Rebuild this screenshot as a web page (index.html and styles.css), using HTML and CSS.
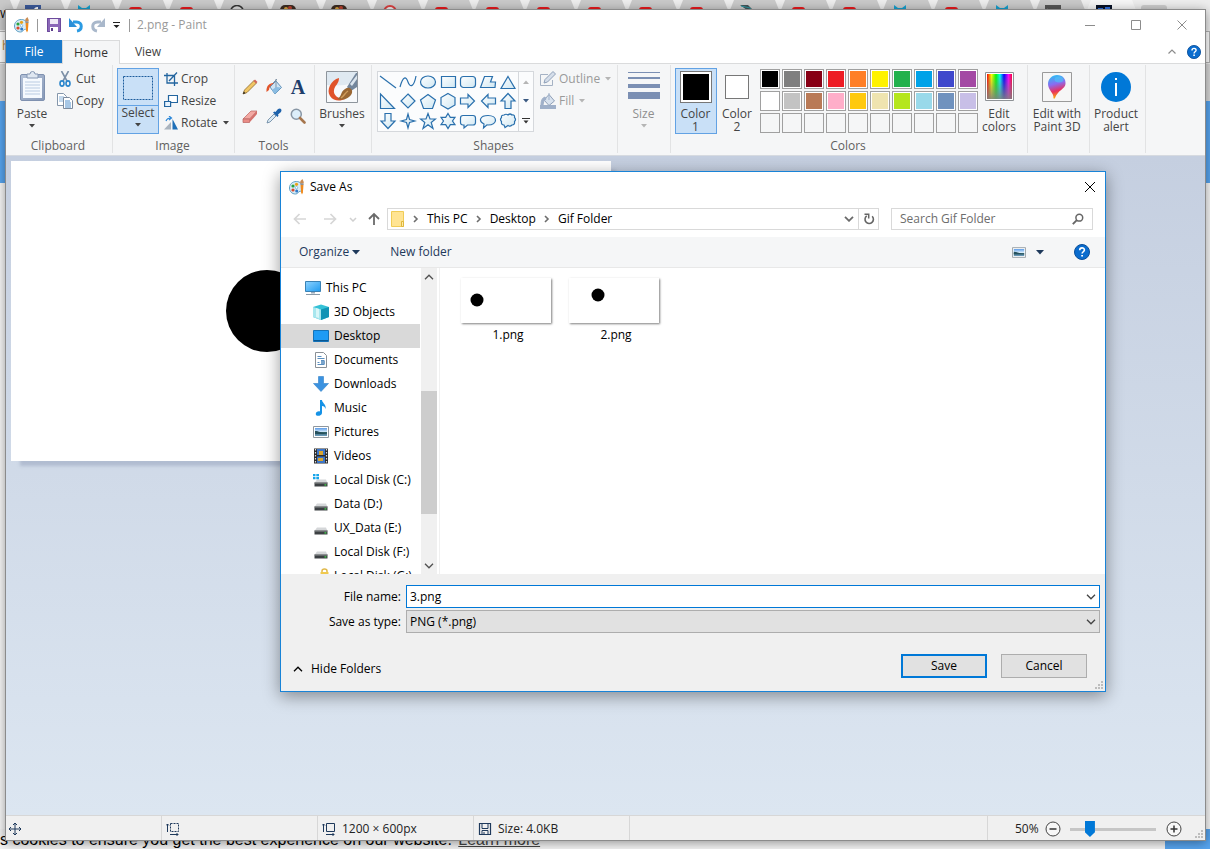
FILE: index.html
```html
<!DOCTYPE html>
<html lang="en">
<head>
<meta charset="utf-8">
<title>2.png - Paint</title>
<link rel="stylesheet" href="styles.css">
</head>
<body>
<svg class="defs" aria-hidden="true">
  <defs>
    <linearGradient id="gBlue" x1="0" y1="0" x2="1" y2="1"><stop offset="0" stop-color="#8fd3ff"/><stop offset="1" stop-color="#1f9bf0"/></linearGradient>
    <linearGradient id="gShape" x1="0" y1="0" x2="1" y2="1"><stop offset="0" stop-color="#fff"/><stop offset="1" stop-color="#cfe7f2"/></linearGradient>
    <linearGradient id="gRain" x1="0" x2="1" y1="0" y2="0"><stop offset="0" stop-color="#f00"/><stop offset=".18" stop-color="#ff0"/><stop offset=".36" stop-color="#0f0"/><stop offset=".52" stop-color="#0ff"/><stop offset=".68" stop-color="#00f"/><stop offset=".86" stop-color="#f0f"/><stop offset="1" stop-color="#f03"/></linearGradient>
    <linearGradient id="gGray" x1="0" x2="0" y1="0" y2="1"><stop offset="0" stop-color="#808080" stop-opacity="0"/><stop offset="1" stop-color="#808080" stop-opacity=".9"/></linearGradient>
    <linearGradient id="gBalloon" x1=".2" x2=".4" y1="0" y2="1"><stop offset="0" stop-color="#25c4f5"/><stop offset=".4" stop-color="#8a6cf0"/><stop offset=".7" stop-color="#e8315f"/><stop offset="1" stop-color="#ffb400"/></linearGradient>
    <linearGradient id="gPhoto" x1="0" x2="0" y1="0" y2="1"><stop offset="0" stop-color="#5b9be8"/><stop offset=".5" stop-color="#d8ecfa"/><stop offset=".55" stop-color="#2f5f63"/><stop offset="1" stop-color="#6fa0c4"/></linearGradient>
    <linearGradient id="gClip" x1="0" x2="1" y1="0" y2="1"><stop offset="0" stop-color="#b4c2d8"/><stop offset="1" stop-color="#8799b8"/></linearGradient>
  </defs>
  <symbol id="paint" viewBox="0 0 16 16">
    <path d="M7.500 2.500C3 2.500.5 5.500.5 9c0 3.500 2.500 6 6 6 2.600 0 2.400-2 3.600-2.400 1.600-.4 3.400-.4 3.400-3.600 0-4-2.500-6.500-6-6.500z" fill="#d7ebf6" stroke="#5d9fc4"/>
    <circle cx="4" cy="7" r="1.600" fill="#2aa33c"/><circle cx="7.500" cy="5.300" r="1.600" fill="#e8a21c"/><circle cx="4" cy="11" r="1.600" fill="#d9492c"/><circle cx="7.700" cy="12" r="1.500" fill="#2f78c8"/><circle cx="7.500" cy="8.700" r="1.200" fill="#fff" stroke="#5d9fc4" stroke-width=".6"/>
    <path d="M11.500 5.500h3l-.6 8-.9 2-.9-2z" fill="#f08a1d"/><path d="M11.500 4.200h3v1.800h-3z" fill="#8b8f94"/><path d="M11.200 4.200C11 2 12 1.500 13.500 0c.3 1.600 1.600 2.500 1.200 4.200z" fill="#c98b52"/>
  </symbol>
  <symbol id="caret" viewBox="0 0 6 4"><path d="M0 0h6L3 3.500z" fill="currentColor"/></symbol>
  <symbol id="drive" viewBox="0 0 16 16"><path d="M4 7.500h9l1.500 3.500h-13z" fill="#d5d7d9"/><path d="M1.500 10.500h13v4h-13z" fill="#3c4043"/><path d="M1.500 10.500h13v1h-13z" fill="#8c9092"/><path d="M11.500 12.300h1.800v1.200h-1.800z" fill="#3fe04a"/></symbol>
  <symbol id="photo" viewBox="0 0 16 12"><path d="M.5.5h15v11H.5z" fill="#fff" stroke="#8e979e"/><path d="M2 2h12v8H2z" fill="url(#gPhoto)"/><path d="M2 5c4 0 6 2 12 2.500V8H2z" fill="#25505c"/></symbol>
  <symbol id="help" viewBox="0 0 16 16"><circle cx="8" cy="8" r="7.500" fill="#0a6cce" stroke="#0a4f9a"/><path d="M5.700 6.200c0-3.100 4.700-3 4.700-.3 0 1.800-2.300 1.900-2.300 3.700" fill="none" stroke="#fff" stroke-width="1.600"/><path d="M7.200 10.900h1.800v1.700H7.200z" fill="#fff"/></symbol>
  <symbol id="chev" viewBox="0 0 10 6"><path d="M1 .8l4 4 4-4" fill="none" stroke="currentColor" stroke-width="1.300"/></symbol>
  <symbol id="crumb" viewBox="0 0 6 8"><path d="M1 1L4 4 1 7" fill="none" stroke="#6d6d6d" stroke-width="1.600"/></symbol>
  <symbol id="yt" viewBox="0 0 16 12"><rect x="2" y="2" width="13" height="10" rx="3" fill="#e8191c"/></symbol>
  <symbol id="cat" viewBox="0 0 16 12"><path d="M2 0l4 3h4l4-3v5l2 2H0l2-2z" fill="#16a0cf"/></symbol>
  <symbol id="food" viewBox="0 0 16 12"><rect width="16" height="12" rx="5" fill="#3a2b22"/><circle cx="6" cy="4" r="2" fill="#d8a33b"/><circle cx="10" cy="3" r="2" fill="#b9402e"/></symbol>
</svg>

<main class="desktop">
  <section class="browser" aria-label="Browser">
    <nav class="btabs">
      <span class="btab first">W</span>
      <span class="btab"><svg viewBox="0 0 16 12"><path d="M0 0h16v12H0z" fill="#3b5998"/><path d="M9 12V5q0-3 4-3v2q-2 0-2 2v6z" fill="#fff"/></svg>(1)</span>
      <span class="btab"><svg><use href="#cat"/></svg>[</span>
      <span class="btab"><svg><use href="#yt"/></svg>Vi</span>
      <span class="btab"><svg><use href="#yt"/></svg>Ni</span>
      <span class="btab"><svg viewBox="0 0 16 12"><circle cx="8" cy="7" r="6.500" fill="#ddd" stroke="#333" stroke-width="1.500"/></svg>F</span>
      <span class="btab"><svg><use href="#food"/></svg>(S</span>
      <span class="btab"><svg><use href="#food"/></svg>(S</span>
      <span class="btab"><svg viewBox="0 0 16 12"><circle cx="8" cy="7" r="6" fill="#eee" stroke="#d94040" stroke-width="2"/></svg>L</span>
      <span class="btab"><svg><use href="#yt"/></svg>[</span>
      <span class="btab"><svg><use href="#yt"/></svg>Ul</span>
      <span class="btab"><svg><use href="#yt"/></svg>V</span>
      <span class="btab"><svg><use href="#yt"/></svg>V</span>
      <span class="btab"><svg><use href="#yt"/></svg>Di</span>
      <span class="btab"><svg><use href="#yt"/></svg>U</span>
      <span class="btab"><svg viewBox="0 0 16 12"><path d="M1 0h8l6 6-2 6-5-7z" fill="#435358"/><path d="M2 1l9 2 3 5" fill="none" stroke="#2c9aa5"/></svg>Y(</span>
      <span class="btab"><svg><use href="#yt"/></svg>V</span>
      <span class="btab"><svg><use href="#yt"/></svg>(S</span>
      <span class="btab"><svg><use href="#cat"/></svg>[</span>
      <span class="btab"><svg><use href="#yt"/></svg>(S</span>
      <span class="btab"><svg><use href="#cat"/></svg>[</span>
      <span class="btab"><svg viewBox="0 0 16 12"><path d="M0 0h16v12H0z" fill="#555"/><path d="M2 4l3 2-3 2" fill="none" stroke="#ccc"/></svg>Gl</span>
      <span class="btab active"><svg viewBox="0 0 16 12"><path d="M0 0h16v12H0z" fill="#081226"/><path d="M2 3h5v5H2zM9 2h5v6H9z" fill="#2d6fe0"/></svg>V</span>
      <span class="newtab"></span>
    </nav>
    <div class="bbar"><span class="baddr">h</span></div>
    <div class="bhead"></div>
    <div class="bpage"></div>
    <div class="cookie"><p>s cookies to ensure you get the best experience on our website. <a href="#">Learn more</a></p><span class="gotit"></span></div>
  </section>

  <section class="paint" aria-label="Paint">
    <header class="titlebar">
      <svg class="i16"><use href="#paint"/></svg>
      <span class="tsep"></span>
      <button class="qa" aria-label="Save"><svg class="i16" viewBox="0 0 16 16"><path d="M1 1h14v14H1z" fill="#8b67b8"/><path d="M1.500 1.500h13v13h-13z" fill="none" stroke="#6c4a9c"/><path d="M4 2h8v5H4z" fill="#efe9f6"/><path d="M4 10h8v5H4z" fill="#fff"/><path d="M5 11h2v3H5z" fill="#5b3d8a"/></svg></button>
      <button class="qa" aria-label="Undo"><svg class="i16" viewBox="0 0 16 16"><path d="M5 5h3.500c6.500 0 6 8 .5 9" fill="none" stroke="#2b9be3" stroke-width="3"/><path d="M1 1v9h8z" fill="#2b8fd8"/></svg></button>
      <button class="qa" aria-label="Redo"><svg class="i16" viewBox="0 0 16 16"><path d="M11 5H7.500C1 5 1.500 13 7 14" fill="none" stroke="#a9b8cb" stroke-width="3"/><path d="M15 1v9H7z" fill="#a9b8cb"/></svg></button>
      <button class="qa small" aria-label="Customize"><svg class="i8" viewBox="0 0 8 6"><path d="M0 0h7v1H0zM.5 3h6l-3 3z" fill="#222"/></svg></button>
      <span class="tsep last"></span>
      <h1>2.png - Paint</h1>
      <div class="wctl">
        <button aria-label="Minimize"><svg viewBox="0 0 10 10"><path d="M0 5.500h10" stroke="#8c8c8c"/></svg></button>
        <button aria-label="Maximize"><svg viewBox="0 0 10 10"><path d="M.5.5h9v9h-9z" fill="none" stroke="#8c8c8c"/></svg></button>
        <button aria-label="Close"><svg viewBox="0 0 10 10"><path d="M.5.5l9 9M9.500.5l-9 9" stroke="#8c8c8c"/></svg></button>
      </div>
    </header>
    <nav class="tabs">
      <button class="file">File</button><button class="on">Home</button><button>View</button>
      <span class="fill"></span>
      <button class="tool" aria-label="Collapse ribbon"><svg class="c8" viewBox="0 0 8 5"><path d="M.5 4.500L4 1l3.500 3.500" fill="none" stroke="#8c8c8c" stroke-width="1.200"/></svg></button>
      <button class="tool" aria-label="Help"><svg class="i14"><use href="#help"/></svg></button>
    </nav>

    <div class="ribbon">
      <div class="group clip">
        <div class="gbody">
          <button class="big"><svg class="i32" viewBox="0 0 32 32"><rect x="4.500" y="3.500" width="24" height="26" rx="1.500" fill="url(#gClip)" stroke="#7f91b0"/><path d="M7 7h19v20H7z" fill="#f5f9fe"/><path d="M9 11h15M9 14h15M9 17h15M9 20h15M9 23h15" stroke="#b9cbe2"/><path d="M11 3h3q0-2.500 2.500-2.500T19 3h3v4H11z" fill="#dfe7f1" stroke="#8496b2"/></svg>Paste<svg class="car"><use href="#caret"/></svg></button>
          <div class="list">
            <button><svg class="i16" viewBox="0 0 16 16"><path d="M4.500 0l5.500 10M11.500 0L6 10" stroke="#7c8fa6" stroke-width="1.600"/><ellipse cx="5" cy="12.500" rx="2" ry="2.600" fill="none" stroke="#2b86cc" stroke-width="1.600"/><ellipse cx="11" cy="12.500" rx="2" ry="2.600" fill="none" stroke="#2b86cc" stroke-width="1.600"/></svg>Cut</button>
            <button><svg class="i16" viewBox="0 0 16 16"><path d="M.5.5h6l3 3v9h-9z" fill="#fff" stroke="#8496ab"/><path d="M2 4h5M2 6h5M2 8h5" stroke="#88b2da"/><path d="M6.500 4.500h6l3 3v8h-9z" fill="#fff" stroke="#7c8b9e"/><path d="M8 8h5M8 10h6M8 12h6M8 14h6" stroke="#4f8fcc"/></svg>Copy</button>
          </div>
        </div>
        <div class="glabel">Clipboard</div>
      </div>

      <div class="group image">
        <div class="gbody">
          <button class="big sel"><span class="seltop"><svg viewBox="0 0 32 26"><path d="M1.500 1.500h29v23h-29z" fill="none" stroke="#1c5c9c" stroke-dasharray="2 1"/></svg></span>Select<svg class="car"><use href="#caret"/></svg></button>
          <div class="list">
            <button><svg class="i14" viewBox="0 0 14 14"><path d="M3 1v10h11M0 3.500h10.500V14M13 .5L5 9" fill="none" stroke="#23659f" stroke-width="1.300"/></svg>Crop</button>
            <button><svg class="i14" viewBox="0 0 14 14"><path d="M4.500 1.500h9v7h-9z" fill="#fff" stroke="#23659f" stroke-width="1.200"/><path d="M.6 7.500h6v5h-6z" fill="#e8f3fd" stroke="#23659f" stroke-width="1.200"/></svg>Resize</button>
            <button><svg class="i14" viewBox="0 0 14 14"><path d="M7 6v7.500H0z" fill="#aab4bf"/><path d="M8.500 3v10.500H14z" fill="#1e6fb8"/><path d="M2 5q1-3 5-3M5 0l2.500 2L5 4" fill="none" stroke="#2a86d8" stroke-width="1.200"/></svg>Rotate<svg class="car"><use href="#caret"/></svg></button>
          </div>
        </div>
        <div class="glabel">Image</div>
      </div>

      <div class="group tools">
        <div class="gbody">
          <div class="toolgrid">
            <button aria-label="Pencil"><svg viewBox="0 0 16 16"><path d="M1 15l1.500-4L12 1.500l2.500 2.500L5 13.500z" fill="#f1c665" stroke="#8d6a2c" stroke-width=".8"/><path d="M11.500 2l2.500 2.500L15.500 3 13 .5z" fill="#d3675c"/><path d="M1 15l.8-2.500 1.700 1.700z" fill="#222"/></svg></button>
            <button aria-label="Fill with color"><svg viewBox="0 0 16 16"><path d="M4 8l6-6 5.500 6.500L9 15z" fill="#cfe4f4" stroke="#6191b8"/><path d="M10 11V0M7 4l4-4" stroke="#8093a5"/><path d="M8 4C4 4 0 6 .5 13l2.500-2C3 8 5 6 8 4z" fill="#e2552c"/><path d="M10 8l5 .5L9 15l-3-4z" fill="#8abce2"/></svg></button>
            <button aria-label="Text"><b class="letter">A</b></button>
            <button aria-label="Eraser"><svg viewBox="0 0 16 16"><path d="M1 11l8-8h6l-7.500 8z" fill="#f3a9a3" stroke="#b9625e" stroke-width=".7"/><path d="M1 11h6.500v3.500H1z" fill="#e98c86" stroke="#b9625e" stroke-width=".7"/><path d="M7.500 11L15 3v3l-7.500 8.500z" fill="#d4716c"/></svg></button>
            <button aria-label="Color picker"><svg viewBox="0 0 16 16"><path d="M1 15l1-3 6-6 2 2-6 6z" fill="#dbeaf5" stroke="#62819d" stroke-width=".8"/><path d="M7 4.500l1.500-1 1 .5L12 1q2-1 3 0t0 3l-3 2.500.5 1-1 1.500z" fill="#1e62ab"/></svg></button>
            <button aria-label="Magnifier"><svg viewBox="0 0 16 16"><circle cx="6.300" cy="6.300" r="5" fill="#dceefa" stroke="#8896a5" stroke-width="1.500"/><path d="M10 10l4.500 4.500" stroke="#a6764e" stroke-width="2.600" stroke-linecap="round"/></svg></button>
          </div>
        </div>
        <div class="glabel">Tools</div>
      </div>

      <div class="group brushes">
        <div class="gbody">
          <button class="big"><svg class="i32" viewBox="0 0 32 32"><path d="M.5.5h31v31H.5z" fill="#f7f9fb" stroke="#8e959c"/><path d="M1 1h30v10Q16 16 1 14z" fill="#dfe9f1"/><path d="M13 7C5 9 0 19 4 25c4 6 11 5 15 3-7 0-12-4-11-9 1-5 5-6 5-12z" fill="#e0532a"/><path d="M21 16L30 2h1v14l-6 4z" fill="#73869c"/><path d="M24 13l7-9v4l-5 7z" fill="#dbe5ee"/><path d="M11 28c5-2 3-7 8-10 4-3 8 0 7 4-2 5-8 8-15 6z" fill="#9a6733"/><path d="M15 27c3-2 4-5 7-7" fill="none" stroke="#cf9c5c" stroke-width="1.500"/></svg>Brushes<svg class="car"><use href="#caret"/></svg></button>
        </div>
        <div class="glabel"></div>
      </div>

      <div class="group shapes">
        <div class="gbody">
          <div class="gallery">
            <div class="shapegrid">
              <button aria-label="Line"><svg viewBox="0 0 18 18"><path d="M1 3l16 12"/></svg></button>
              <button aria-label="Curve"><svg viewBox="0 0 18 18"><path class="nf" d="M1 14C4 3 7 3 9 9s6 5 8-6"/></svg></button>
              <button aria-label="Oval"><svg viewBox="0 0 18 18"><ellipse cx="9" cy="9" rx="7.500" ry="6"/></svg></button>
              <button aria-label="Rectangle"><svg viewBox="0 0 18 18"><path d="M2.500 3.500h14v11h-14z"/></svg></button>
              <button aria-label="Rounded rectangle"><svg viewBox="0 0 18 18"><rect x="1.500" y="3.500" width="15" height="11" rx="3"/></svg></button>
              <button aria-label="Polygon"><svg viewBox="0 0 18 18"><path d="M5.500 3.500h8l-2 5.500h5l-.5 5.500H1.500z"/></svg></button>
              <button aria-label="Triangle"><svg viewBox="0 0 18 18"><path d="M9 3.500l7 12H2z"/></svg></button>
              <button aria-label="Right triangle"><svg viewBox="0 0 18 18"><path d="M1.500 2v14.500h14z"/></svg></button>
              <button aria-label="Diamond"><svg viewBox="0 0 18 18"><path d="M9 2l7 7-7 7-7-7z"/></svg></button>
              <button aria-label="Pentagon"><svg viewBox="0 0 18 18"><path d="M9 2.500l7.500 5.500-3 8.500h-9L1.500 8z"/></svg></button>
              <button aria-label="Hexagon"><svg viewBox="0 0 18 18"><path d="M9 1.500l7 4v7.500l-7 4-7-4V5.500z"/></svg></button>
              <button aria-label="Right arrow"><svg viewBox="0 0 18 18"><path d="M1.500 6H9V2.500L15.500 9 9 15.500V12H1.500z"/></svg></button>
              <button aria-label="Left arrow"><svg viewBox="0 0 18 18"><path d="M16.500 6H9V2.500L2.500 9 9 15.500V12h7.500z"/></svg></button>
              <button aria-label="Up arrow"><svg viewBox="0 0 18 18"><path d="M6 16.500V9H2L9 1.500 16 9h-4v7.500z"/></svg></button>
              <button aria-label="Down arrow"><svg viewBox="0 0 18 18"><path d="M6 1.500V9H2l7 7.500L16 9h-4V1.500z"/></svg></button>
              <button aria-label="Four-point star"><svg viewBox="0 0 18 18"><path d="M9 2l1.500 5.500L16 9l-5.500 1.500L9 16l-1.500-5.500L2 9l5.500-1.500z"/></svg></button>
              <button aria-label="Five-point star"><svg viewBox="0 0 18 18"><path d="M9 1.500l2 5.500h5.500l-4.300 3.500 1.800 6-5-3.700-5 3.700 1.800-6L1.500 7H7z"/></svg></button>
              <button aria-label="Six-point star"><svg viewBox="0 0 18 18"><path d="M9 1.500l2.300 3.800H16L13.500 9l2.500 3.700h-4.700L9 16.500l-2.300-3.800H2L4.500 9 2 5.300h4.700z"/></svg></button>
              <button aria-label="Rounded callout"><svg viewBox="0 0 18 18"><path d="M4 3.500h10q2.500 0 2.500 2.500v4.500Q16.500 13 14 13H8.500L5 16v-3H4q-2.500 0-2.500-2.500V6Q1.500 3.500 4 3.500z"/></svg></button>
              <button aria-label="Oval callout"><svg viewBox="0 0 18 18"><path d="M9 3.500c10 0 10 9.500 0 9.500l-1-.1L4.500 16l.5-4C-1 9 1 3.500 9 3.500z"/></svg></button>
              <button aria-label="Cloud callout"><svg viewBox="0 0 18 18"><path d="M5 3q2-1.500 4 0 2-2 4 0 3-.5 2.500 2.500 2 2 0 4Q16 13 13 13q-2 2-4 .5L6 15.500 5 13q-3 0-2.500-3.500-2-2 0-4Q2 3 5 3z"/></svg></button>
            </div>
            <div class="gscroll"><svg class="car dim flip"><use href="#caret"/></svg><svg class="car"><use href="#caret"/></svg><svg class="i8" viewBox="0 0 8 6"><path d="M0 0h8v1H0zM1.500 2.500h5L4 5.500z" fill="#333"/></svg></div>
          </div>
          <div class="list dis">
            <button disabled><svg class="i16" viewBox="0 0 16 16"><path d="M12.500 9v5.500h-12v-11H8" fill="none" stroke="#a5b2c4"/><path d="M4 12l1-3.500L13 .5 15.500 3 7.500 11z" fill="#d5deea" stroke="#8fa0b8"/></svg>Outline<svg class="car"><use href="#caret"/></svg></button>
            <button disabled><svg class="i16" viewBox="0 0 16 16"><path d="M0 12h16v4H0z" fill="#9fb0c9"/><path d="M4 7l5-5.500L14.500 8 9 12.500z" fill="#d8e2ee" stroke="#8fa0b8"/><path d="M9 7V0M5 4Q1 5 1 12h2q0-4 3-6z" fill="#9fb0c9" stroke="#9fb0c9"/></svg>Fill<svg class="car"><use href="#caret"/></svg></button>
          </div>
        </div>
        <div class="glabel">Shapes</div>
      </div>

      <div class="group size">
        <div class="gbody">
          <button class="big" disabled><svg class="i32" viewBox="0 0 32 32"><path d="M0 1h32v1H0zM0 6h32v2H0zM0 13h32v4H0zM0 21h32v7H0z" fill="#7b8fb3"/></svg>Size<svg class="car"><use href="#caret"/></svg></button>
        </div>
        <div class="glabel"></div>
      </div>

      <div class="group colors">
        <div class="gbody">
          <button class="big sel"><span class="well black"></span><span>Color<br>1</span></button>
          <button class="big c2"><span class="well white"></span><span>Color<br>2</span></button>
          <div class="palette">
            <button class="k1" aria-label="Black"></button><button class="k2" aria-label="Gray"></button><button class="k3" aria-label="Dark red"></button><button class="k4" aria-label="Red"></button><button class="k5" aria-label="Orange"></button><button class="k6" aria-label="Yellow"></button><button class="k7" aria-label="Green"></button><button class="k8" aria-label="Turquoise"></button><button class="k9" aria-label="Indigo"></button><button class="k10" aria-label="Purple"></button>
            <button class="k11" aria-label="White"></button><button class="k12" aria-label="Light gray"></button><button class="k13" aria-label="Brown"></button><button class="k14" aria-label="Rose"></button><button class="k15" aria-label="Gold"></button><button class="k16" aria-label="Light yellow"></button><button class="k17" aria-label="Lime"></button><button class="k18" aria-label="Light turquoise"></button><button class="k19" aria-label="Blue-gray"></button><button class="k20" aria-label="Lavender"></button>
            <button class="k0" aria-label="Custom 1"></button><button class="k0" aria-label="Custom 2"></button><button class="k0" aria-label="Custom 3"></button><button class="k0" aria-label="Custom 4"></button><button class="k0" aria-label="Custom 5"></button><button class="k0" aria-label="Custom 6"></button><button class="k0" aria-label="Custom 7"></button><button class="k0" aria-label="Custom 8"></button><button class="k0" aria-label="Custom 9"></button><button class="k0" aria-label="Custom 10"></button>
          </div>
          <button class="big"><svg class="i32" viewBox="0 0 32 32"><path d="M2.500 1.500h28v28h-28z" fill="#fff" stroke="#8e9296"/><path d="M4 3h25v25H4z" fill="url(#gRain)"/><path d="M4 3h25v25H4z" fill="url(#gGray)"/></svg><span>Edit<br>colors</span></button>
        </div>
        <div class="glabel">Colors</div>
      </div>

      <div class="group p3d">
        <div class="gbody"><button class="big"><svg class="i32" viewBox="0 0 32 32"><path d="M1.500 1.500h29v29h-29z" fill="#f6f6f6" stroke="#9a9a9a"/><path d="M16 4c6 0 9 4 8.500 9-.5 5-7.500 6-10.500 14-.5 1-1.500 1-1.500 0 .5-5-5.500-8-5.500-14 0-5 4-9 9-9z" fill="url(#gBalloon)"/><ellipse cx="18" cy="8.500" rx="4.500" ry="3" fill="#43d6f7" opacity=".5"/></svg><span>Edit with<br>Paint 3D</span></button></div>
        <div class="glabel"></div>
      </div>
      <div class="group alert">
        <div class="gbody"><button class="big"><svg class="i32" viewBox="0 0 32 32"><circle cx="16" cy="16" r="15" fill="#0078d7"/><path d="M15 7h2v2h-2zM15 12h2v13h-2z" fill="#fff"/></svg><span>Product<br>alert</span></button></div>
        <div class="glabel"></div>
      </div>
    </div>

    <div class="work">
      <div class="canvas"><svg viewBox="0 0 600 300"><circle cx="256" cy="150" r="41" fill="#000"/></svg></div>
    </div>

    <footer class="status">
      <div class="cell"><svg class="i14" viewBox="0 0 14 14"><path d="M7 1v12M1 7h12M5 3l2-2 2 2M5 11l2 2 2-2M3 5L1 7l2 2M11 5l2 2-2 2" fill="none" stroke="#1e395b"/></svg></div>
      <div class="cell"><svg class="i14" viewBox="0 0 14 14"><path d="M4.500 1.500h8v8h-8z" fill="none" stroke="#1e395b" stroke-dasharray="2 1"/><path d="M1.500 10V2M0 3.500L1.500 2 3 3.500M4 12.500h8M10.500 11l1.500 1.500-1.500 1.500" fill="none" stroke="#1e395b"/></svg></div>
      <div class="cell"><svg class="i14" viewBox="0 0 14 14"><path d="M4.500 1.500h8v8h-8z" fill="none" stroke="#1e395b"/><path d="M1.500 10V2M0 3.500L1.500 2 3 3.500M4 12.500h8M10.500 11l1.500 1.500-1.500 1.500" fill="none" stroke="#1e395b"/></svg>1200 × 600px</div>
      <div class="cell"><svg class="i14" viewBox="0 0 14 14"><path d="M1.500 1.500h11v11h-11z" fill="none" stroke="#1e395b" stroke-width="1.200"/><path d="M4 1.500v5h6v-5M4 12.500v-4h6v4M6 10v2" fill="none" stroke="#1e395b"/></svg>Size: 4.0KB</div>
      <div class="cell zoomcell">
        <label for="zoom">50%</label>
        <button aria-label="Zoom out"><svg class="i16" viewBox="0 0 16 16"><circle cx="8" cy="8" r="7" fill="#f7f7f7" stroke="#444"/><path d="M4.500 8h7" stroke="#333" stroke-width="1.500"/></svg></button>
        <input id="zoom" type="range" min="0" max="100" value="20">
        <button aria-label="Zoom in"><svg class="i16" viewBox="0 0 16 16"><circle cx="8" cy="8" r="7" fill="#f7f7f7" stroke="#444"/><path d="M4.500 8h7M8 4.500v7" stroke="#333" stroke-width="1.500"/></svg></button>
        <svg class="grip" viewBox="0 0 9 9"><path d="M6 0h2v2H6zM3 3h2v2H3zM6 3h2v2H6zM0 6h2v2H0zM3 6h2v2H3zM6 6h2v2H6z" fill="#bdbdbd"/></svg>
      </div>
    </footer>
  </section>

  <section class="dialog" role="dialog" aria-label="Save As">
    <header class="dtitle"><svg class="i16"><use href="#paint"/></svg><h2>Save As</h2><button aria-label="Close dialog"><svg viewBox="0 0 12 12"><path d="M1 1l10 10M11 1L1 11" stroke="#000"/></svg></button></header>
    <div class="dnav">
      <button aria-label="Back"><svg class="i14" viewBox="0 0 14 14"><path d="M1.500 7H13M6.500 2l-5 5 5 5" fill="none" stroke="#d6d6d6" stroke-width="1.700"/></svg></button>
      <button aria-label="Forward"><svg class="i14" viewBox="0 0 14 14"><path d="M1 7h11.500M7.500 2l5 5-5 5" fill="none" stroke="#d6d6d6" stroke-width="1.700"/></svg></button>
      <button class="narrow" aria-label="Recent"><svg class="c8" viewBox="0 0 8 5"><path d="M1 1l3 3 3-3" fill="none" stroke="#d0d0d0" stroke-width="1.500"/></svg></button>
      <button class="up" aria-label="Up"><svg class="i14" viewBox="0 0 14 14"><path d="M7 2v11M2 7l5-5 5 5" fill="none" stroke="#6a6a6a" stroke-width="1.800"/></svg></button>
      <div class="addr">
        <svg class="i16 fold" viewBox="0 0 16 16"><path d="M1.500.5h12v15h-12z" fill="#ffe493" stroke="#f0cc57"/><path d="M11.500 10.500h2v5h-2z" fill="#ffeaa8" stroke="#e0b83c"/></svg>
        <svg class="cr"><use href="#crumb"/></svg><a href="#">This PC</a>
        <svg class="cr"><use href="#crumb"/></svg><a href="#">Desktop</a>
        <svg class="cr"><use href="#crumb"/></svg><a href="#">Gif Folder</a>
        <span class="fill"></span>
        <svg class="c10" viewBox="0 0 10 6"><path d="M1 .8l4 4 4-4" fill="none" stroke="#6a6a6a" stroke-width="1.800"/></svg>
        <button class="refresh" aria-label="Refresh"><svg class="i12" viewBox="0 0 12 12"><path d="M9.200 3.300a4.200 4.200 0 1 1-5.500-.4" fill="none" stroke="#666" stroke-width="1.600"/><path d="M1.500 1.200h4.200v4.200" fill="none" stroke="#666" stroke-width="1.500"/></svg></button>
      </div>
      <div class="search"><input type="text" aria-label="Search" placeholder="Search Gif Folder"><svg class="i12" viewBox="0 0 12 12"><circle cx="7.300" cy="4.700" r="3.400" fill="none" stroke="#666" stroke-width="1.500"/><path d="M4.800 7.200L.8 11.200" stroke="#666" stroke-width="1.900"/></svg></div>
    </div>
    <div class="dtool">
      <button>Organize<svg class="c8" viewBox="0 0 8 5"><path d="M0 0h8L4 4.500z" fill="#1e395b"/></svg></button>
      <button>New folder</button>
      <span class="fill"></span>
      <button aria-label="View"><svg class="view"><use href="#photo"/></svg></button>
      <button aria-label="View options"><svg class="c8" viewBox="0 0 8 5"><path d="M0 0h8L4 4.500z" fill="#1e395b"/></svg></button>
      <button class="dhelp" aria-label="Help"><svg class="i16"><use href="#help"/></svg></button>
    </div>
    <div class="dmain">
      <ul class="tree">
        <li class="root"><svg viewBox="0 0 16 16"><path d="M.5 1.500h15v10H.5z" fill="url(#gBlue)" stroke="#3a82b5"/><path d="M6 12h4v1.500H6z" fill="#9ab"/><path d="M1 14.500h14" stroke="#8a9aa8"/></svg>This PC</li>
        <li><svg viewBox="0 0 16 16"><path d="M8 .5l8 2.500v10l-8 3-8-3V3z" fill="#35c1d6"/><path d="M8 5.500L16 3v10l-8 3z" fill="#1293b5"/><path d="M0 3l8 2.500V16l-8-3z" fill="#a7e6ee"/><path d="M3 4l3 1v9l-3-1z" fill="#d7f6f8"/></svg>3D Objects</li>
        <li class="cur"><svg viewBox="0 0 16 16"><path d="M.5 2.500h15v11H.5z" fill="#1e9bf5" stroke="#1472b8"/><path d="M1 12h14v1H1z" fill="#0a5791"/></svg>Desktop</li>
        <li><svg viewBox="0 0 16 16"><path d="M2.500.5h8l3 3v12h-11z" fill="#fff" stroke="#8a9096"/><path d="M4.500 4.500h4M4.500 6.500h7M8 8.500h3.500M4.500 10.500h2M4.500 12.500h7" stroke="#5a8fc0"/><path d="M8 9h4v3H8z" fill="#7ba5cc"/></svg>Documents</li>
        <li><svg viewBox="0 0 16 16"><path d="M5.500.5h5v7h5L8 15.500.5 7.500h5z" fill="#3b92e0" stroke="#2f7fc8" stroke-width=".6"/></svg>Downloads</li>
        <li><svg viewBox="0 0 16 16"><path d="M7 0h2c0 3 4.500 4 3.500 9-.5-2-1.500-3-3.500-3v7c0 3-6 4-6.200 1.200C2.600 12 5 11 7 11.500z" fill="#1592e6"/></svg>Music</li>
        <li><svg class="ph"><use href="#photo"/></svg>Pictures</li>
        <li><svg viewBox="0 0 16 16"><path d="M1 .5h14v15H1z" fill="#2b2b2b"/><path d="M4 1h8v6H4z" fill="#3c75c8"/><path d="M4 8.500h8V15H4z" fill="#3c75c8"/><path d="M6 3h4v4H6zM5 10h5v3H5z" fill="#d9a42e"/><path d="M2.500 1v14M13.500 1v14" stroke="#ddd" stroke-width="1.200" stroke-dasharray="1.500 1.500"/></svg>Videos</li>
        <li><svg viewBox="0 0 16 16"><use href="#drive"/><path d="M0 2h2.500v2.300H0zM3.300 2H6v2.300H3.300zM0 5h2.500v2.300H0zM3.300 5H6v2.300H3.300z" fill="#17a5ea"/></svg>Local Disk (C:)</li>
        <li><svg><use href="#drive"/></svg>Data (D:)</li>
        <li><svg><use href="#drive"/></svg>UX_Data (E:)</li>
        <li><svg><use href="#drive"/></svg>Local Disk (F:)</li>
        <li><svg viewBox="0 0 16 16"><path d="M9 4V3q0-2 2.500-2T14 3v1" fill="none" stroke="#e0b84a" stroke-width="1.500"/><path d="M7.500 4h8v5h-8z" fill="#f0c94e"/></svg>Local Disk (G:)</li>
      </ul>
      <div class="sbar"><svg class="c10 flip"><use href="#chev"/></svg><div class="track"><div class="thumb"></div></div><svg class="c10"><use href="#chev"/></svg></div>
      <div class="files">
        <figure><svg class="thumbpic" viewBox="0 0 90 45"><circle cx="16" cy="22" r="6.500"/></svg><figcaption>1.png</figcaption></figure>
        <figure><svg class="thumbpic" viewBox="0 0 90 45"><circle cx="29" cy="17" r="6.500"/></svg><figcaption>2.png</figcaption></figure>
      </div>
    </div>
    <form class="dform">
      <label for="fname">File name:</label>
      <div class="combo"><input id="fname" type="text" value="3.png"><svg class="c10"><use href="#chev"/></svg></div>
      <label for="ftype">Save as type:</label>
      <div class="combo gray"><select id="ftype"><option>PNG (*.png)</option></select><svg class="c10"><use href="#chev"/></svg></div>
    </form>
    <div class="dfoot">
      <button class="hide"><svg class="c10 flip"><use href="#chev"/></svg>Hide Folders</button>
      <span class="fill"></span>
      <button class="btn primary">Save</button>
      <button class="btn">Cancel</button>
    </div>
    <svg class="grip" viewBox="0 0 9 9"><path d="M6 0h2v2H6zM3 3h2v2H3zM6 3h2v2H6zM0 6h2v2H0zM3 6h2v2H3zM6 6h2v2H6z" fill="#bdbdbd"/></svg>
  </section>
</main>
</body>
</html>
```

FILE: styles.css
```css
* { box-sizing: border-box; }
body { margin: 0; font: 12px/16px "Open Sans", "Noto Sans", sans-serif; color: #000; }
button { font: inherit; color: inherit; background: none; border: 0; padding: 0; margin: 0; display: flex; align-items: center; justify-content: center; }
input, select { font: inherit; color: inherit; }
svg { display: block; flex: none; }
h1, h2, p, ul, figure { margin: 0; padding: 0; font-size: 12px; font-weight: 400; }
.defs { position: absolute; width: 0; height: 0; }
.i32 { width: 32px; height: 32px; }
.i16 { width: 16px; height: 16px; }
.i14 { width: 14px; height: 14px; }
.i12 { width: 12px; height: 12px; }
.i8 { width: 8px; height: 6px; }
.c10 { width: 10px; height: 6px; }
.c8 { width: 8px; height: 5px; }
.car { width: 6px; height: 4px; }
.flip { transform: rotate(180deg); }
.fill { flex: 1; }

.desktop { position: relative; height: 100vh; overflow: hidden; }

/* browser behind */
.browser { position: absolute; inset: 0; display: flex; flex-direction: column; background: #fff; overflow: hidden; }
.btabs { display: flex; height: 30px; background: #ededed; overflow: hidden; }
.btab { flex: none; width: 51px; padding: 5px 0 0 10px; display: flex; gap: 7px; background: #c9c9c9; clip-path: polygon(5px 0, 46px 0, 50px 10px, 50px 30px, 1px 30px, 1px 10px); overflow: hidden; white-space: nowrap; line-height: 18px; font-size: 11px; }
.btab.first { width: 15px; padding-left: 0; clip-path: polygon(0 0, 10px 0, 14px 10px, 14px 30px, 0 30px); }
.btab.active { background: #f6f6f6; }
.btab svg { width: 16px; height: 12px; }
.newtab { width: 26px; height: 14px; margin: 5px 0 0 4px; background: #ccc; border-radius: 3px; }
.bbar { height: 34px; background: #efefef; padding: 1px 0; display: flex; }
.baddr { flex: 1; background: #fff; border: 1px solid #b5b5b5; border-left: 0; padding: 6px 0 0 2px; color: #b98a3c; }
.bhead { height: 37px; background: #d8d8d8; }
.bpage { flex: 1; background: linear-gradient(#57a5f0 0 82px, #f8f8f8 82px); }
.cookie { display: flex; justify-content: space-between; height: 20px; background: #f4f4f4; font: 16px/22px "Liberation Sans", Arial, sans-serif; }
.cookie p { font-size: 16px; white-space: nowrap; }
.cookie a { color: #444; margin-left: 2px; }
.gotit { width: 45px; background: #57a5f0; }

/* paint window */
.paint { position: absolute; inset: 9px 4px 8px 5px; display: flex; flex-direction: column; background: #fff; border: 1px solid #8b8b8b; box-shadow: 0 2px 10px rgba(0,0,0,.4); }
.titlebar { display: flex; align-items: center; height: 30px; padding-left: 8px; flex: none; }
.titlebar h1 { color: #999; }
.tsep { width: 1px; height: 13px; background: #999; margin: 0 7px; }
.tsep.last { margin: 0 7px 0 6px; }
.qa { margin-right: 6px; margin-left: 1px; }
.qa + .qa { margin-left: 0; }
.qa.small { margin: 0 2px 0 1px; }
.wctl { margin-left: auto; display: flex; }
.wctl button { width: 46px; height: 30px; }
.wctl svg { width: 10px; height: 10px; }
.tabs { display: flex; height: 24px; flex: none; border-bottom: 1px solid #dadbdc; color: #444; }
.tabs button { width: 56px; height: 23px; }
.tabs .file { background: #1979ca; color: #fff; }
.tabs .on { width: 58px; height: 24px; background: #f5f6f7; border: 1px solid #dadbdc; border-bottom: 0; color: #333; }
.tabs .tool { width: 22px; }

.ribbon { display: flex; flex: none; height: 92px; padding: 1px 0 2px; background: #f5f6f7; border-bottom: 1px solid #d6dae0; color: #444; white-space: nowrap; overflow: hidden; }
.group { flex: none; display: flex; flex-direction: column; border-right: 1px solid #e2e3e4; }
.gbody { display: flex; flex: 1; padding: 3px 4px 0; }
.glabel { height: 17px; line-height: 20px; padding-right: 2px; text-align: center; color: #5f5f5f; }
.clip { width: 107px; }
.image { width: 122px; }
.tools { width: 80px; }
.brushes { width: 57px; }
.shapes { width: 246px; }
.size { width: 53px; }
.colors { width: 357px; }
.p3d { width: 62px; }
.alert { width: 56px; }
.big { flex-direction: column; justify-content: flex-start; width: 42px; height: 66px; padding-top: 3px; line-height: 13px; text-align: center; }
.big .i32 { margin-bottom: 4px; }
.big .car { margin-top: 4px; }
.big:disabled, .dis button { color: #8f8f8f; }
.big:disabled .car { color: #b5b5b5; }
.sel { background: #c9e0f7; border: 1px solid #62a2e4; padding-top: 2px; }
.seltop { align-self: stretch; height: 35px; display: flex; justify-content: center; align-items: center; border-bottom: 1px solid #62a2e4; }
.seltop svg { width: 32px; height: 26px; }
.list { margin-left: 5px; }
.list button { height: 22px; gap: 3px; line-height: 16px; }
.list .car { margin-left: 2px; }
.clip .gbody { padding-left: 5px; }
.clip .list { margin-left: 4px; }
.toolgrid { display: grid; grid-template-columns: repeat(3, 24px); grid-auto-rows: 29px; padding-top: 4px; }
.tools .gbody { padding-left: 3px; }
.toolgrid svg { width: 16px; height: 16px; }
.letter { font: bold 20px/20px "Liberation Serif", serif; color: #1e3d6b; }
.brushes .gbody, .size .gbody { padding-left: 3px; }
.brushes .big, .size .big { width: 48px; }
.gallery { display: flex; height: 61px; margin-top: 3px; margin-left: 1px; border: 1px solid #d5d8dc; background: #fbfcfd; }
.shapegrid { display: grid; grid-template-columns: repeat(7, 20px); grid-template-rows: 19px 20px 20px; }
.shapegrid svg { width: 18px; height: 18px; fill: url(#gShape); stroke: #2a70ad; stroke-width: 1.2; }
.shapegrid .nf { fill: none; }
.gscroll { width: 15px; display: flex; flex-direction: column; justify-content: space-around; align-items: center; border-left: 1px solid #d5d8dc; color: #3b5a82; }
.dim { color: #b5b5b5; }
.dis { margin-left: 6px; }
.dis button { color: #9a9a9a; }
.dis .car { color: #b5b5b5; }
.well { display: block; border: 1px solid #777; box-shadow: inset 0 0 0 2px #fff; }
.black { width: 32px; height: 32px; background: #000; margin-bottom: 4px; }
.white { width: 24px; height: 24px; background: #fff; margin: 4px 0 8px; }
.colors .big:not(.sel) { padding-right: 2px; }
.colors .sel { padding-right: 1px; }
.palette { display: grid; grid-template-columns: repeat(10, 20px); grid-auto-rows: 20px; gap: 2px; margin: 1px 0 0 1px; }
.palette button { width: 20px; height: 20px; border: 1px solid #a0a0a0; box-shadow: inset 0 0 0 1px #fff; }
.palette .k0 { box-shadow: none; }
.palette + .big { width: 44px; }
.k1 { background: #000; } .k2 { background: #7f7f7f; } .k3 { background: #880015; } .k4 { background: #ed1c24; } .k5 { background: #ff7f27; }
.k6 { background: #fff200; } .k7 { background: #22b14c; } .k8 { background: #00a2e8; } .k9 { background: #3f48cc; } .k10 { background: #a349a4; }
.k11 { background: #fff; } .k12 { background: #c3c3c3; } .k13 { background: #b97a57; } .k14 { background: #ffaec9; } .k15 { background: #ffc90e; }
.k16 { background: #efe4b0; } .k17 { background: #b5e61d; } .k18 { background: #99d9ea; } .k19 { background: #7092be; } .k20 { background: #c8bfe7; }
.p3d .gbody, .alert .gbody { padding-left: 0; padding-right: 3px; justify-content: center; }
.p3d .big, .alert .big { width: 52px; }

.work { flex: 1; min-height: 0; padding: 5px; background: linear-gradient(#c5cfe0, #dce6f1); overflow: hidden; }
.canvas { width: 600px; background: #fff; box-shadow: 7px 7px 3px -2px rgba(120,135,165,.35); }
.canvas svg { width: 100%; }
.status { display: flex; flex: none; height: 25px; background: #f0f0f0; border-top: 1px solid #d7d7d7; color: #222; }
.cell { width: 156px; display: flex; align-items: center; gap: 6px; padding: 2px 0 0 4px; border-right: 1px solid #d7d7d7; }
.cell:first-child { padding-left: 2px; }
.zoomcell { position: relative; width: 218px; margin-left: auto; padding: 2px 23px 0 27px; border-right: 0; border-left: 1px solid #d7d7d7; gap: 6px; }
.zoomcell input { flex: 1; min-width: 0; margin: 0 4px 0 3px; height: 18px; appearance: none; background: linear-gradient(#c6c6c6, #c6c6c6) center / 100% 3px no-repeat; }
.zoomcell input::-webkit-slider-thumb { appearance: none; width: 10px; height: 16px; background: #0078d7; clip-path: polygon(0 0, 100% 0, 100% 70%, 50% 100%, 0 70%); }
.grip { position: absolute; right: 1px; bottom: 1px; width: 9px; height: 9px; }

/* save dialog */
.dialog { position: absolute; inset: 171px 104px 157px 280px; display: flex; flex-direction: column; background: #f0f0f0; border: 1px solid #1883d7; box-shadow: 0 4px 16px rgba(0,0,0,.4); }
.dtitle { display: flex; align-items: center; height: 30px; padding: 0 9px 0 8px; gap: 5px; background: #fff; flex: none; }
.dtitle button { margin-left: auto; }
.dtitle button svg { width: 12px; height: 12px; }
.dnav { display: flex; align-items: center; padding: 6px 12px 7px; background: #fff; flex: none; }
.dnav > button { width: 14px; margin-right: 16px; }
.dnav > .narrow { width: 8px; margin: 0 10px 0 -4px; }
.dnav > .up { margin-right: 6px; }
.addr { flex: 1; display: flex; align-items: center; height: 22px; padding-left: 2px; border: 1px solid #d9d9d9; }
.addr a { color: #000; text-decoration: none; margin-right: 8px; }
.cr { width: 6px; height: 8px; margin-right: 8px; }
.fold { margin-right: 7px; }
.refresh { width: 20px; height: 20px; margin-left: 4px; border-left: 1px solid #d9d9d9; }
.search { display: flex; align-items: center; width: 202px; height: 22px; margin-left: 12px; padding: 0 8px 0 8px; border: 1px solid #d9d9d9; }
.search input { flex: 1; min-width: 0; border: 0; padding: 0; outline: 0; background: none; }
.search input::placeholder { color: #6d6d6d; opacity: 1; }
.dtool { display: flex; align-items: center; height: 31px; padding: 0 15px 0 18px; background: #f5f6f7; border-bottom: 1px solid #e8e8e8; color: #1e395b; flex: none; }
.dtool button { gap: 3px; margin-right: 30px; }
.dtool .fill ~ button { margin-right: 10px; }
.dtool .dhelp.dhelp { margin: 0 0 0 20px; }
.view { width: 14px; height: 11px; }
.dmain { display: flex; flex: 1; min-height: 0; background: #fff; }
.tree { width: 139px; padding-top: 8px; overflow: hidden; list-style: none; white-space: nowrap; flex: none; }
.tree li { display: flex; align-items: center; gap: 5px; height: 24px; padding-left: 32px; }
.tree .root { padding-left: 24px; }
.tree .cur { background: #d9d9d9; }
.tree svg { width: 16px; height: 16px; }
.tree .ph { height: 12px; }
.sbar { display: flex; flex-direction: column; align-items: center; flex: none; width: 16px; margin-left: 1px; padding: 6px 0 5px; background: #f0f0f0; color: #505050; }
.track { flex: 1; align-self: stretch; display: flex; flex-direction: column; padding-top: 111px; }
.thumb { flex: none; height: 123px; background: #cdcdcd; }
.files { flex: 1; display: flex; align-items: flex-start; gap: 17px; margin-left: 2px; padding: 10px 21px; border-left: 1px solid #f0f0f0; }
.files figure { width: 91px; text-align: center; }
.thumbpic { width: 90px; height: 45px; background: #fff; box-shadow: 1px 1px 2px rgba(0,0,0,.5); }
figcaption { margin-top: 4px; padding-left: 3px; }
.dform { display: grid; grid-template-columns: 120px 1fr; gap: 2px 5px; padding: 11px 5px 0 0; align-items: center; }
.dform label { text-align: right; }
.combo { display: flex; align-items: center; height: 23px; padding-right: 3px; background: #fff; border: 1px solid #0078d7; color: #444; }
.combo.gray { background: #e1e1e1; border-color: #adadad; }
.combo input, .combo select { flex: 1; min-width: 0; height: 21px; padding: 0 3px; border: 0; outline: 0; background: none; appearance: none; color: #000; }
.dfoot { display: flex; align-items: flex-start; padding: 21px 18px 7px 12px; }
.hide { gap: 8px; height: 30px; }
.btn { width: 86px; height: 24px; margin-left: 14px; background: #e1e1e1; border: 1px solid #adadad; }
.primary { border: 2px solid #0078d7; }
```
